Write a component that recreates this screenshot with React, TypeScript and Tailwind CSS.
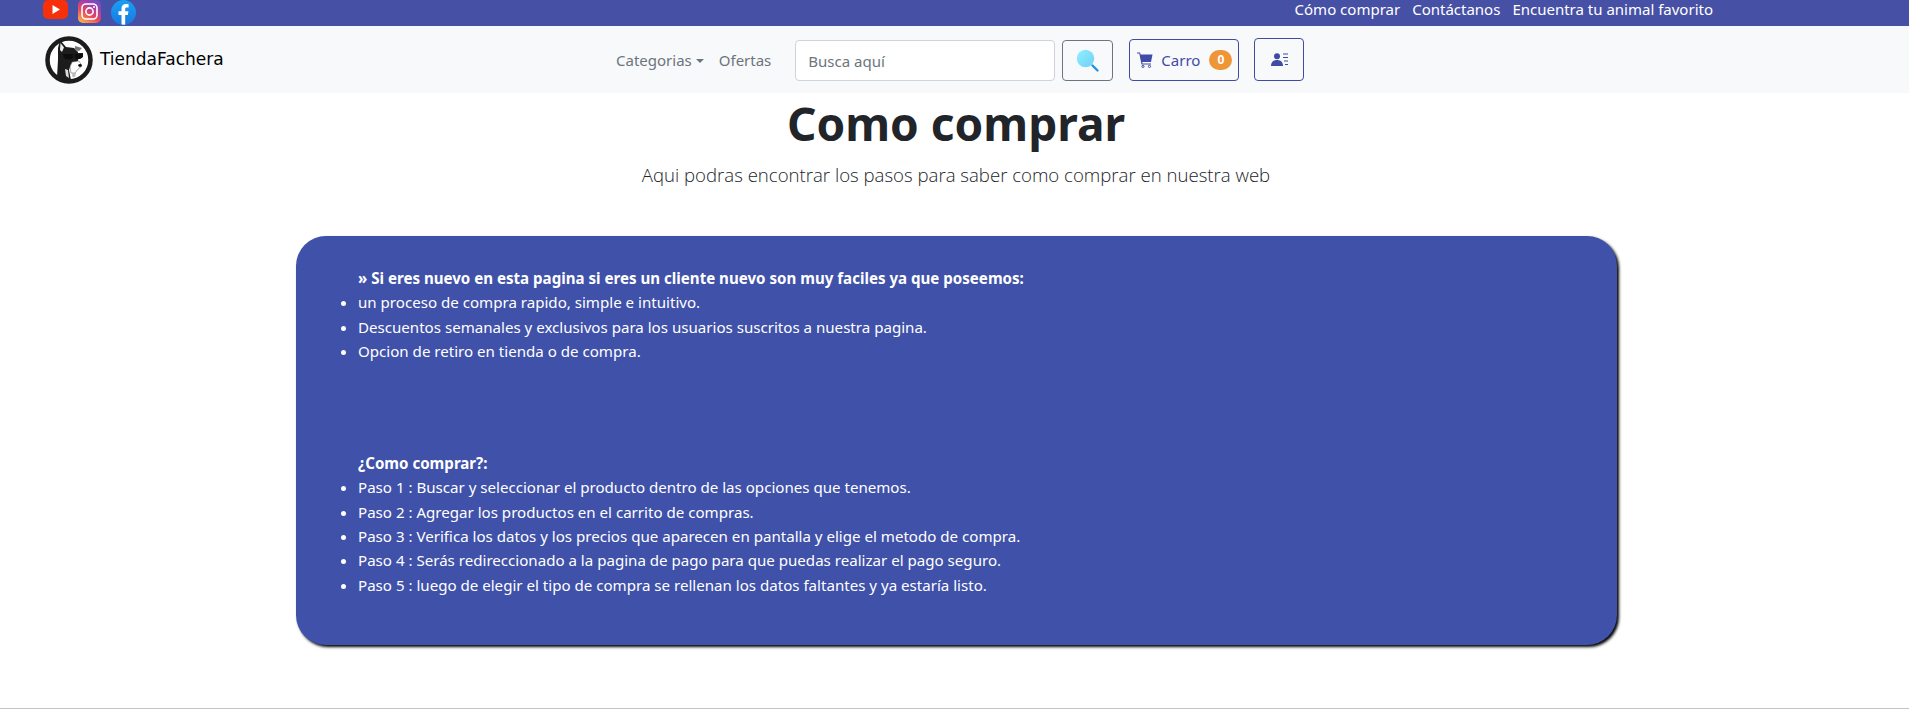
const font = { fontFamily: '"Noto Sans", sans-serif' };

function YoutubeIcon() {
  return (
    <svg width="25" height="19" viewBox="0 0 25 19">
      <rect x="0" y="0" width="25" height="19" rx="5" fill="#f5300a" />
      <path d="M9.5 5 L17 9.5 L9.5 14 Z" fill="#fff" />
    </svg>
  );
}

function InstagramIcon() {
  return (
    <svg width="23" height="23" viewBox="0 0 23 23">
      <defs>
        <linearGradient id="ig" x1="0.2" y1="1" x2="0.8" y2="0">
          <stop offset="0" stopColor="#fdb045" />
          <stop offset="0.4" stopColor="#e8465f" />
          <stop offset="0.75" stopColor="#a03fb0" />
          <stop offset="1" stopColor="#6b50c0" />
        </linearGradient>
      </defs>
      <rect width="23" height="23" rx="5" fill="url(#ig)" />
      <rect x="4" y="4" width="15" height="15" rx="4" fill="none" stroke="#fff" strokeWidth="1.6" />
      <circle cx="11.5" cy="11.5" r="3.6" fill="none" stroke="#fff" strokeWidth="1.6" />
      <circle cx="16" cy="7" r="1" fill="#fff" />
    </svg>
  );
}

function FacebookIcon() {
  return (
    <svg width="25" height="25" viewBox="0 0 25 25">
      <defs>
        <linearGradient id="fb" x1="0" y1="0" x2="0" y2="1">
          <stop offset="0" stopColor="#18a0f5" />
          <stop offset="1" stopColor="#1a78e0" />
        </linearGradient>
      </defs>
      <circle cx="12.5" cy="12.5" r="12.5" fill="url(#fb)" />
      <path d="M10.5 24.5 V15 H7.5 V11.2 H10.5 V8.6 C10.5 5.6 12.2 4 15 4 C16 4 17 4.1 17.6 4.2 V7.4 H15.9 C14.5 7.4 14.2 8.1 14.2 9.1 V11.2 H17.4 L16.9 15 H14.2 V24.8 Z" fill="#fff" />
    </svg>
  );
}

function DogLogo() {
  return (
    <svg width="48" height="48" viewBox="0 0 48 48">
      <circle cx="24" cy="24" r="21.5" fill="#fff" stroke="#1c1c1c" strokeWidth="4.5" />
      {/* cuello y cabeza */}
      <path d="M12 41 L13 24 L13 12 L15 4 L21 11 L29 12 L33 16 L33 25 L26 28 L24 34 L26 44 L18 45 Z" fill="#1c1c1c" />
      <path d="M15.5 7 L19 11.5 L17 16 L15 14 Z" fill="#ececec" />
      {/* gafas */}
      <path d="M13 17 H38 V18.5 H13 Z" fill="#1c1c1c" />
      <path d="M18 18 H28 V22 Q24 25 19 22 Z M29 18 H38 V21 Q34 25 30 22 Z" fill="#0d0d0d" />
      <path d="M30 10 L37 12 L34 15 L30 14 Z" fill="#777" />
      {/* hocico blanco */}
      <path d="M27 26 L34 25 L37 30 L33 33 L30 37 L26 37 L25 31 Z" fill="#fff" stroke="#555" strokeWidth="0.5" />
      <ellipse cx="35" cy="29.5" rx="1.8" ry="1.4" fill="#111" />
      <path d="M27 37 L31 37 L30 41 L27.5 41 Z" fill="#bbb" />
      <path d="M20 33 L23 34 L24 42 L21 40 Z" fill="#ddd" />
    </svg>
  );
}

function SearchIcon() {
  return (
    <svg width="24" height="24" viewBox="0 0 24 24">
      <defs>
        <linearGradient id="lens" x1="0" y1="0" x2="1" y2="1">
          <stop offset="0" stopColor="#8ff0ff" />
          <stop offset="1" stopColor="#72cff5" />
        </linearGradient>
      </defs>
      <circle cx="9.5" cy="9.5" r="8.7" fill="url(#lens)" />
      <path d="M16.5 16.5 L21.5 21.5" stroke="#1f94e0" strokeWidth="2.4" strokeLinecap="round" />
    </svg>
  );
}

function CartIcon() {
  return (
    <svg width="16" height="16" viewBox="0 0 16 16">
      <path d="M0 0.5 H3 L3.6 2.5 H15.5 L14 10 H5.3 L5.5 11.5 H14 V12.6 H4.5 L2.3 1.6 H0 Z" fill="#3f4ba5" />
      <circle cx="6" cy="14.4" r="1.1" fill="none" stroke="#3f4ba5" />
      <circle cx="12.5" cy="14.4" r="1.1" fill="none" stroke="#3f4ba5" />
    </svg>
  );
}

function UserListIcon() {
  return (
    <svg width="17" height="13" viewBox="0 0 17 13">
      <circle cx="6" cy="3.2" r="3" fill="#3f4ba5" />
      <path d="M0 13 C0 9 2.5 7 6 7 C9.5 7 12 9 12 13 Z" fill="#3f4ba5" />
      <path d="M12 1 H17 M12 4.5 H17 M13 8 H17 M14 11.5 H17" stroke="#3f4ba5" strokeWidth="1" />
    </svg>
  );
}

const steps = [
  "Paso 1 : Buscar y seleccionar el producto dentro de las opciones que tenemos.",
  "Paso 2 : Agregar los productos en el carrito de compras.",
  "Paso 3 : Verifica los datos y los precios que aparecen en pantalla y elige el metodo de compra.",
  "Paso 4 : Serás redireccionado a la pagina de pago para que puedas realizar el pago seguro.",
  "Paso 5 : luego de elegir el tipo de compra se rellenan los datos faltantes y ya estaría listo.",
];

const perks = [
  "un proceso de compra rapido, simple e intuitivo.",
  "Descuentos semanales y exclusivos para los usuarios suscritos a nuestra pagina.",
  "Opcion de retiro en tienda o de compra.",
];

export default function App() {
  return (
    <div className="w-[1909px] h-[710px] overflow-hidden bg-white text-[#212529] flex flex-col" style={font}>
      {/* barra superior */}
      <div className="h-[26px] shrink-0 bg-[#4650a5] flex items-start justify-between pl-[43px] pr-[196px]">
        <div className="flex items-start gap-[10px]">
          <YoutubeIcon />
          <InstagramIcon />
          <FacebookIcon />
        </div>
        <div className="flex gap-[12px] text-white text-[15px] leading-[18px]">
          <span>Cómo comprar</span>
          <span>Contáctanos</span>
          <span>Encuentra tu animal favorito</span>
        </div>
      </div>

      {/* navbar */}
      <div className="h-[67px] shrink-0 bg-[#f8f9fa] flex items-center pl-[45px] pt-[2px]">
        <div className="w-[571px] flex items-center gap-[7px] -mt-[2px]">
          <DogLogo />
          <span className="text-[17px] text-black" style={{ fontFamily: '"Comic Sans MS", "DejaVu Sans", sans-serif' }}>
            TiendaFachera
          </span>
        </div>
        <div className="flex items-center text-[15px] text-[#6c757d]">
          <span>Categorias</span>
          <span className="ml-[4px] border-x-[4px] border-t-[4px] border-x-transparent border-t-[#6c757d]" />
          <span className="ml-[15px]">Ofertas</span>
        </div>
        <input
          placeholder="Busca aquí"
          className="ml-[24px] w-[260px] h-[41px] px-3 bg-white border border-[#ced4da] rounded text-[15px] placeholder:text-[#6c757d] outline-none"
        />
        <button className="ml-[7px] w-[51px] h-[41px] border border-[#6c757d] rounded flex items-center justify-center">
          <SearchIcon />
        </button>
        <button className="ml-[16px] w-[110px] h-[42px] mb-[1px] border border-[#3f4ba5] rounded flex items-center pl-[7px] text-[15px] text-[#3f4ba5]">
          <CartIcon />
          <span className="ml-[8px]">Carro</span>
          <span className="ml-[9px] w-[23px] h-[20px] rounded-full bg-[#ee9537] text-white text-[12px] font-bold flex items-center justify-center">
            0
          </span>
        </button>
        <button className="ml-[15px] w-[50px] h-[43px] mb-[2px] border border-[#3f4ba5] rounded flex items-center justify-center">
          <UserListIcon />
        </button>
      </div>

      {/* contenido */}
      <h1 className="pl-[3px] text-center text-[46px] leading-[60px] font-bold">Como comprar</h1>
      <p className="mt-[7px] pl-[3px] text-center text-[18.6px] leading-[30px] font-light" style={{ fontFamily: '"Open Sans", sans-serif' }}>
        Aqui podras encontrar los pasos para saber como comprar en nuestra web
      </p>

      <div className="mt-[46px] ml-[296px] mr-[292px] h-[409px] bg-[#3f51a9] rounded-[30px] shadow-[2px_2px_3px_#000] text-white text-[15.1px] leading-[24.3px] pt-[30px] pl-[62px]">
        <p className="font-bold">» Si eres nuevo en esta pagina si eres un cliente nuevo son muy faciles ya que poseemos:</p>
        <ul className="list-disc">
          {perks.map((t) => (
            <li key={t}>{t}</li>
          ))}
        </ul>
        <p className="mt-[88px] font-bold">¿Como comprar?:</p>
        <ul className="list-disc">
          {steps.map((t) => (
            <li key={t}>{t}</li>
          ))}
        </ul>
      </div>

      <div className="mt-auto h-px bg-[#c4c4c4] mb-[1px]" />
    </div>
  );
}
